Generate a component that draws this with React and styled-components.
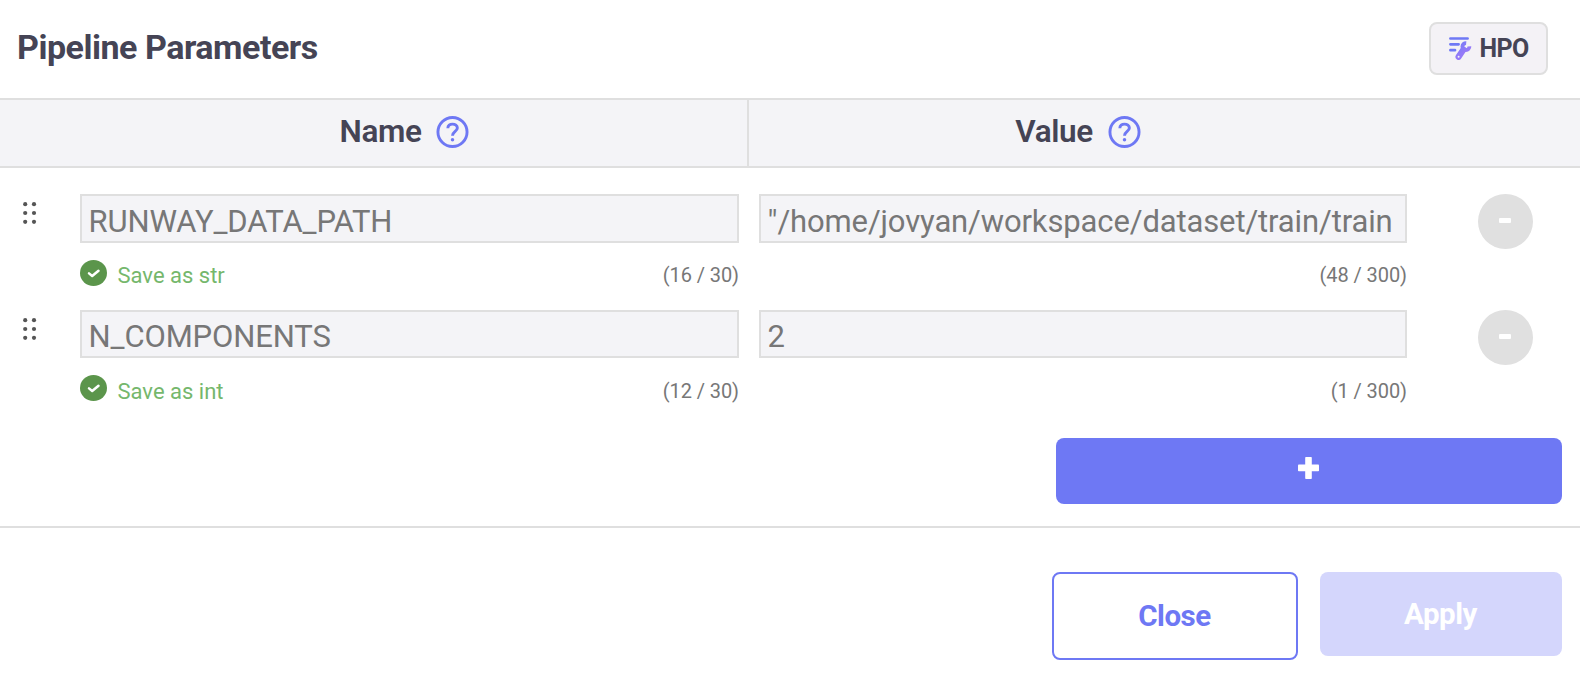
import React from "react";
import styled, { createGlobalStyle } from "styled-components";

const GlobalStyle = createGlobalStyle`
  * { box-sizing: border-box; }
  body { margin: 0; background: #fff; font-family: Roboto, sans-serif; color: #454455; }
  button { font-family: inherit; margin: 0; padding: 0; }
`;

const Dialog = styled.main`
  width: 1580px;
  height: 700px;
  display: flex;
  flex-direction: column;
  background: #fff;
  overflow: hidden;
`;

const TitleBar = styled.header`
  height: 98px;
  display: flex;
  justify-content: space-between;
  align-items: center;
  padding: 0 32px 1px 17px;
`;

const Title = styled.h1`
  margin: 0;
  padding-bottom: 3px;
  font-size: 34px;
  line-height: 40px;
  font-weight: 700;
  letter-spacing: -0.48px;
  white-space: nowrap;
`;

const HpoButton = styled.button`
  width: 119px;
  height: 53px;
  display: flex;
  align-items: center;
  justify-content: center;
  gap: 8px;
  border: 2px solid #dfdfdf;
  border-radius: 8px;
  background: #f4f2f6;
  color: #454455;
  font-size: 25px;
  font-weight: 700;
  letter-spacing: -0.7px;
`;

const TableHead = styled.div`
  height: 70px;
  display: flex;
  background: #f4f4f7;
  border: solid #dfdfdf;
  border-width: 2px 0;
`;

const HeadCell = styled.div`
  width: ${(p) => p.$width}px;
  padding-left: ${(p) => p.$indent}px;
  padding-bottom: 3px;
  display: flex;
  align-items: center;
  justify-content: center;
  gap: 15px;
  border-right: ${(p) => (p.$divided ? "2px solid #dfdfdf" : "none")};
  font-size: 31.5px;
  font-weight: 600;
  letter-spacing: -0.4px;
`;

const Rows = styled.div`
  display: flex;
  flex-direction: column;
  padding-top: 26px;
`;

const Row = styled.div`
  height: 116px;
  display: flex;
  align-items: flex-start;
`;

const Grip = styled.div`
  width: 80px;
  padding: 8px 0 0 23px;
  line-height: 0;
`;

const Field = styled.div`
  width: ${(p) => p.$width}px;
  margin-right: ${(p) => p.$after}px;
`;

const Input = styled.div`
  height: ${(p) => p.$height}px;
  padding: ${(p) => p.$height - 45}px 8px 0 6.6px;
  border: 2px solid #dfdfdf;
  background: #f4f4f7;
  color: #777;
  font-size: 31px;
  line-height: 43px;
  letter-spacing: -0.13px;
  white-space: nowrap;
  overflow: hidden;
`;

const Meta = styled.div`
  height: 26px;
  margin-top: 17px;
  display: flex;
  align-items: flex-start;
`;

const Hint = styled.span`
  margin-left: 10.5px;
  padding-top: ${(p) => p.$drop + 3}px;
  color: #75b76c;
  font-size: 22px;
  line-height: 26px;
`;

const Count = styled.span`
  margin-left: auto;
  padding-top: ${(p) => p.$drop + 2}px;
  color: #777;
  font-size: 20px;
  line-height: 26px;
  letter-spacing: -0.08px;
`;

const RemoveButton = styled.button`
  width: 55px;
  height: 55px;
  border: 0;
  border-radius: 50%;
  background: #e0e0e0;
  display: flex;
  align-items: center;
  justify-content: center;
  padding: 0 1px 2px 0;
`;

const AddArea = styled.div`
  height: 100px;
  display: flex;
  justify-content: flex-end;
  align-items: flex-start;
  padding: 12px 18px 0 0;
`;

const Divider = styled.hr`
  width: 100%;
  height: 2px;
  margin: 0;
  border: 0;
  background: #dfdfdf;
`;

const AddButton = styled.button`
  width: 506px;
  height: 66px;
  border: 0;
  border-radius: 8px;
  background: #6e78f4;
  display: flex;
  align-items: center;
  justify-content: center;
  padding: 0 1px 6px 0;
`;

const Footer = styled.footer`
  display: flex;
  justify-content: flex-end;
  align-items: flex-start;
  gap: 22px;
  padding: 44px 18px 0 0;
`;

const ActionButton = styled.button`
  width: ${(p) => (p.$outlined ? 246 : 242)}px;
  height: ${(p) => (p.$outlined ? 88 : 84)}px;
  padding: 0 1px 1px 0;
  border: ${(p) => (p.$outlined ? "2px solid #6e78f4" : "0")};
  border-radius: 8px;
  background: ${(p) => (p.$outlined ? "#fff" : "#d4d6fc")};
  color: ${(p) => (p.$outlined ? "#6e78f4" : "#fff")};
  font-size: 29.5px;
  font-weight: 700;
  letter-spacing: -0.45px;
`;

const TuneIcon = () => (
  <svg width="23" height="24" viewBox="0 0 23 24" fill="none">
    <defs>
      <linearGradient id="tune" x1="8" y1="2" x2="17" y2="14" gradientUnits="userSpaceOnUse">
        <stop offset="0" stopColor="#6c7af6" />
        <stop offset="1" stopColor="#957af8" />
      </linearGradient>
    </defs>
    <path d="M1.4 1.5H18.6M1.4 7.3H9.6M1.4 13.2H6" stroke="#6f79f5" strokeWidth="2.7" strokeLinecap="round" />
    <g stroke="url(#tune)">
      <path d="M17.2 6.1A3.5 3.5 0 1 0 20.4 9.4" strokeWidth="3.8" />
      <path d="M14.4 12.6L9.6 19.8" strokeWidth="6.2" strokeLinecap="round" />
    </g>
    <circle cx="9.6" cy="19.8" r="1" fill="#f4f2f6" />
  </svg>
);

const HelpIcon = () => (
  <svg width="33" height="34" viewBox="0 0 34 34" fill="none" stroke="#6e78f4">
    <circle cx="17" cy="17" r="15" strokeWidth="3" />
    <path d="M12.2 13.2C12.2 10.4 14.2 8.9 17 8.9S22 10.5 22 13C22 16.2 17 16.7 17 20.8" strokeWidth="3" />
    <circle cx="17" cy="24.9" r="1.8" fill="#6e78f4" stroke="none" />
  </svg>
);

const GripIcon = () => (
  <svg width="14" height="23" viewBox="0 0 14 23" fill="#555">
    {[2.2, 11, 19.8].map((y) => (
      <React.Fragment key={y}>
        <circle cx="2.2" cy={y} r="2.1" />
        <circle cx="11" cy={y} r="2.1" />
      </React.Fragment>
    ))}
  </svg>
);

const CheckIcon = () => (
  <svg width="27" height="26" viewBox="0 0 27 26">
    <ellipse cx="13.5" cy="13" rx="13.5" ry="13" fill="#5b954b" />
    <path d="M9 13.4L12.2 16L18.5 10.7" fill="none" stroke="#fff" strokeWidth="2.5" strokeLinecap="round" strokeLinejoin="round" />
  </svg>
);

const MinusIcon = () => (
  <svg width="12" height="5" viewBox="0 0 12 5">
    <rect width="12" height="5" rx="1" fill="#fff" />
  </svg>
);

const PlusIcon = () => (
  <svg width="21" height="22" viewBox="0 0 21 22" fill="#fff">
    <rect x="7.2" y="0" width="6.6" height="22" rx="0.8" />
    <rect x="0" y="7.6" width="21" height="6.6" rx="0.8" />
  </svg>
);

const params = [
  { name: "RUNWAY_DATA_PATH", nameCount: 16, value: "\"/home/jovyan/workspace/dataset/train/train", valueCount: 48, type: "str", height: 49 },
  { name: "N_COMPONENTS", nameCount: 12, value: "2", valueCount: 1, type: "int", height: 48 },
];

export default function App() {
  return (
    <>
      <GlobalStyle />
      <Dialog>
        <TitleBar>
          <Title>Pipeline Parameters</Title>
          <HpoButton><TuneIcon /><span>HPO</span></HpoButton>
        </TitleBar>
        <TableHead>
          <HeadCell $width={749} $indent={62} $divided><span>Name</span><HelpIcon /></HeadCell>
          <HeadCell $width={658} $indent={0}><span>Value</span><HelpIcon /></HeadCell>
        </TableHead>
        <Rows>
          {params.map((p) => (
            <Row key={p.name}>
              <Grip><GripIcon /></Grip>
              <Field $width={659} $after={20}>
                <Input $height={p.height}>{p.name}</Input>
                <Meta>
                  <CheckIcon />
                  <Hint $drop={49 - p.height}>Save as {p.type}</Hint>
                  <Count $drop={49 - p.height}>({p.nameCount} / 30)</Count>
                </Meta>
              </Field>
              <Field $width={648} $after={71}>
                <Input $height={p.height}>{p.value}</Input>
                <Meta><Count $drop={49 - p.height}>({p.valueCount} / 300)</Count></Meta>
              </Field>
              <RemoveButton aria-label="Remove"><MinusIcon /></RemoveButton>
            </Row>
          ))}
        </Rows>
        <AddArea>
          <AddButton aria-label="Add"><PlusIcon /></AddButton>
        </AddArea>
        <Divider />
        <Footer>
          <ActionButton $outlined>Close</ActionButton>
          <ActionButton>Apply</ActionButton>
        </Footer>
      </Dialog>
    </>
  );
}
